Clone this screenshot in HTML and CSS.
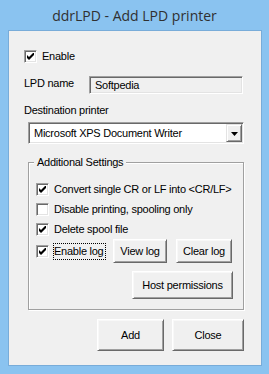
FILE: index.html
```html
<!DOCTYPE html>
<html>
<head>
<meta charset="utf-8">
<link rel="stylesheet" href="styles.css">
</head>
<body>
<div class="window">
  <div class="titlebar">ddrLPD - Add LPD printer</div>
  <div class="client">
    <div class="enable-row">
      <span class="cb"><svg width="7" height="7" viewBox="0 0 7 7"><polygon points="0,2 2,4 7,-1 7,2 2,7 0,5" fill="#000"/></svg></span>
      <span class="lbl">Enable</span>
    </div>
    <div class="name-row">
      <span class="name-lbl">LPD name</span>
      <div class="field">Softpedia</div>
    </div>
    <div class="dest-label">Destination printer</div>
    <div class="combo">
      <span class="combo-text">Microsoft XPS Document Writer</span>
      <span class="combo-btn"><svg width="7" height="4" viewBox="0 0 7 4"><polygon points="0,0 7,0 3.5,4" fill="#000"/></svg></span>
    </div>
    <fieldset class="group">
      <legend>Additional Settings</legend>
      <div class="opt">
        <span class="cb"><svg width="7" height="7" viewBox="0 0 7 7"><polygon points="0,2 2,4 7,-1 7,2 2,7 0,5" fill="#000"/></svg></span>
        <span class="lbl">Convert single CR or LF into &lt;CR/LF&gt;</span>
      </div>
      <div class="opt">
        <span class="cb"></span>
        <span class="lbl">Disable printing, spooling only</span>
      </div>
      <div class="opt">
        <span class="cb"><svg width="7" height="7" viewBox="0 0 7 7"><polygon points="0,2 2,4 7,-1 7,2 2,7 0,5" fill="#000"/></svg></span>
        <span class="lbl">Delete spool file</span>
      </div>
      <div class="log-row">
        <span class="cb"><svg width="7" height="7" viewBox="0 0 7 7"><polygon points="0,2 2,4 7,-1 7,2 2,7 0,5" fill="#000"/></svg></span>
        <span class="focus-lbl">Enable log</span>
        <button class="btn view-btn">View log</button>
        <button class="btn clear-btn">Clear log</button>
      </div>
      <div class="host-row">
        <button class="btn host-btn">Host permissions</button>
      </div>
    </fieldset>
    <div class="actions">
      <button class="btn add-btn">Add</button>
      <button class="btn close-btn">Close</button>
    </div>
  </div>
</div>
</body>
</html>
```

FILE: styles.css
```css
html, body {
  margin: 0;
  padding: 0;
}
body {
  width: 269px;
  height: 374px;
  overflow: hidden;
}
.window {
  width: 269px;
  height: 374px;
  background: #8ac3f0;
  display: flex;
  flex-direction: column;
}
.titlebar {
  height: 30px;
  flex: none;
  text-align: center;
  font-family: "Open Sans", sans-serif;
  font-size: 14px;
  line-height: 31px;
  color: #303030;
}
.client {
  margin: 0 7px 0 8px;
  height: 336px;
  box-sizing: border-box;
  border: 1px solid #78acd9;
  background: #f0f0f0;
  font-family: "Liberation Sans", Arial, sans-serif;
  font-size: 11px;
  line-height: 13px;
  letter-spacing: -0.25px;
  color: #000;
  white-space: nowrap;
}
.cb {
  width: 13px;
  height: 13px;
  flex: none;
  box-sizing: border-box;
  border: 1px solid;
  border-color: #a0a0a0 #ffffff #ffffff #a0a0a0;
  box-shadow: inset 1px 1px #696969, inset -1px -1px #e3e3e3;
  background: #fff;
  display: flex;
  align-items: center;
  justify-content: center;
}
.cb svg {
  display: block;
}
.enable-row {
  margin-top: 19px;
  padding-left: 15px;
  height: 13px;
  display: flex;
  align-items: center;
  gap: 5px;
}
.name-row {
  margin-top: 13px;
  padding-left: 15px;
  height: 18px;
  display: flex;
  align-items: flex-start;
}
.name-lbl {
  width: 65px;
  padding-top: 1px;
}
.field {
  width: 154px;
  height: 18px;
  box-sizing: border-box;
  border: 1px solid;
  border-color: #a0a0a0 #ffffff #ffffff #a0a0a0;
  box-shadow: inset 1px 1px #696969, inset -1px -1px #e3e3e3;
  background: #f0f0f0;
  padding-left: 5px;
  line-height: 16px;
}
.dest-label {
  margin-top: 10px;
  padding-left: 15px;
}
.combo {
  margin: 5px 0 0 19px;
  width: 216px;
  height: 22px;
  box-sizing: border-box;
  border: 1px solid;
  border-color: #a0a0a0 #ffffff #ffffff #a0a0a0;
  box-shadow: inset 1px 1px #696969, inset -1px -1px #e3e3e3;
  background: #fff;
  padding: 1px;
  display: flex;
  align-items: center;
}
.combo-text {
  flex: 1;
  padding-left: 4px;
}
.combo-btn {
  width: 16px;
  height: 18px;
  box-sizing: border-box;
  border: 1px solid;
  border-color: #e3e3e3 #696969 #696969 #e3e3e3;
  box-shadow: inset 1px 1px #ffffff, inset -1px -1px #a0a0a0;
  background: #f0f0f0;
  display: flex;
  align-items: center;
  justify-content: center;
}
.combo-btn svg {
  display: block;
  margin-top: 1px;
}
.group {
  margin: 12px 0 0 19px;
  width: 216px;
  min-width: 0;
  box-sizing: border-box;
  border: 1px solid #a0a0a0;
  box-shadow: inset 1px 1px #ffffff, 1px 1px #ffffff;
  padding: 14px 11px 10px 7px;
}
.group legend {
  padding: 0 3px;
  margin-left: -2px;
  background: #f0f0f0;
  line-height: 13px;
}
.opt {
  height: 13px;
  display: flex;
  align-items: center;
  gap: 5px;
  margin-bottom: 7px;
}
.log-row {
  margin-top: -4px;
  height: 24px;
  display: flex;
  align-items: center;
}
.focus-lbl {
  margin-left: 4px;
  border: 1px dotted #000;
  padding: 1px 1px 1px 0;
  line-height: 13px;
}
.btn {
  font-family: "Liberation Sans", Arial, sans-serif;
  font-size: 11px;
  letter-spacing: -0.25px;
  color: #000;
  background: #f0f0f0;
  box-sizing: border-box;
  border: 1px solid;
  border-color: #ffffff #696969 #696969 #ffffff;
  box-shadow: inset 1px 1px #f8f8f8, inset -1px -1px #a0a0a0;
  padding: 0;
  margin: 0;
  border-radius: 0;
  white-space: nowrap;
}
.view-btn {
  margin-left: auto;
  width: 54px;
  height: 24px;
}
.clear-btn {
  margin-left: 9px;
  width: 56px;
  height: 24px;
}
.host-row {
  margin-top: 8px;
  display: flex;
  justify-content: flex-end;
}
.host-btn {
  width: 101px;
  height: 28px;
  margin-right: -1px;
}
.actions {
  margin-top: 9px;
  display: flex;
  justify-content: flex-end;
  gap: 8px;
  padding-right: 17px;
}
.add-btn {
  width: 67px;
  height: 32px;
}
.close-btn {
  width: 72px;
  height: 32px;
}
```
